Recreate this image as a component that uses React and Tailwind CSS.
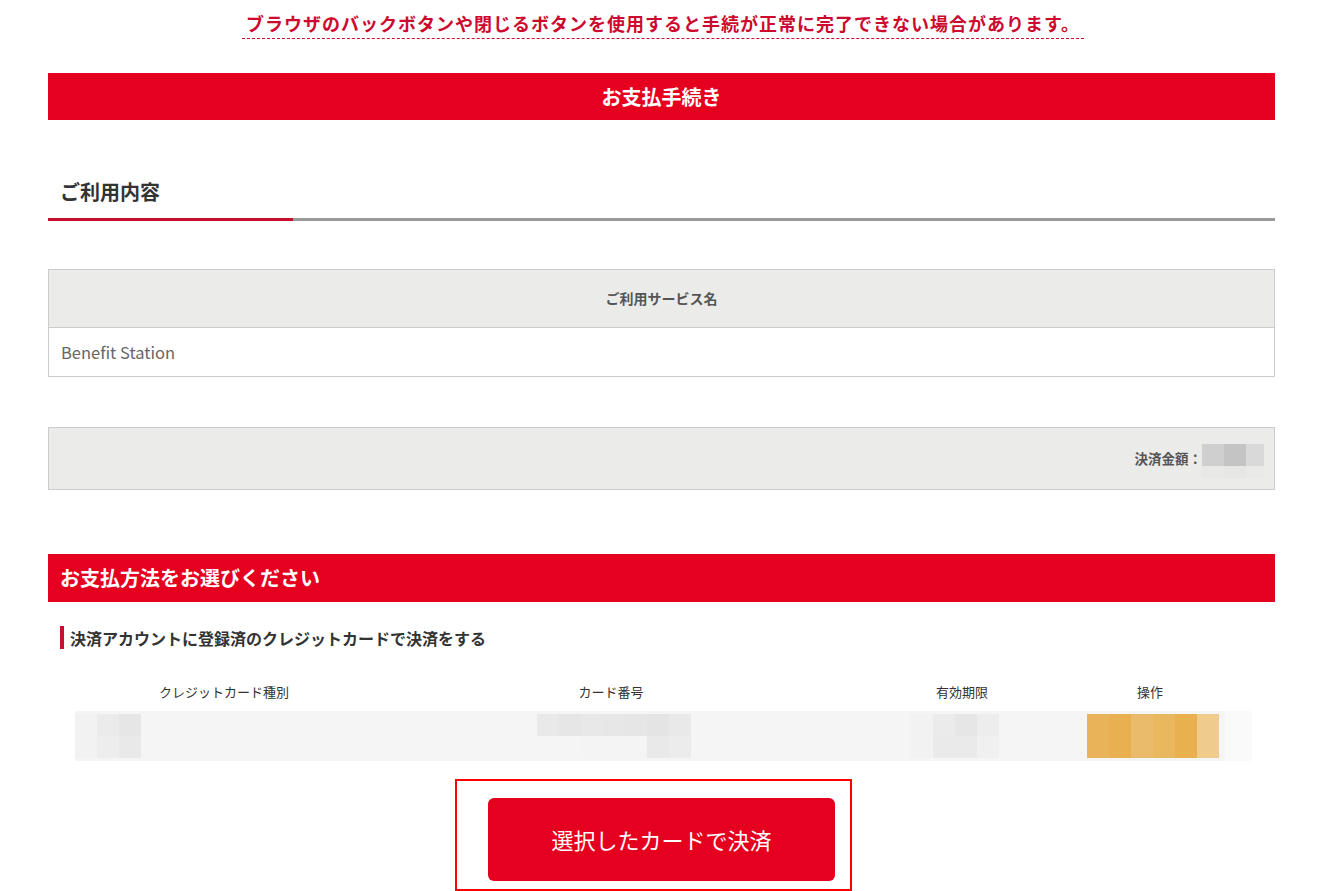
import React from "react";

const jp = { fontFamily: '"Noto Sans CJK JP", "Noto Sans", sans-serif' };

function Blocks({ rows }) {
  return (
    <div className="flex flex-col">
      {rows.map((r, i) => (
        <div key={i} className="flex">
          {r.map((c, j) => (
            <div key={j} className="w-[22px] h-[22px]" style={{ background: c }} />
          ))}
        </div>
      ))}
    </div>
  );
}

export default function App() {
  return (
    <div className="w-[1326px] min-h-[891px] bg-white text-[#333]" style={jp}>
      <div className="flex justify-center pt-[10px]">
        <p className="text-[18px] leading-[27px] tracking-[1px] font-bold text-[#cc0a2f] border-b border-dashed border-[#cc0a2f] pb-[1px] px-[4px]">
          ブラウザのバックボタンや閉じるボタンを使用すると手続が正常に完了できない場合があります。
        </p>
      </div>

      <div className="ml-[48px] w-[1227px]">
        <div className="mt-[34px] h-[47px] bg-[#e60020] flex items-center justify-center text-white text-[20px] font-bold">
          お支払手続き
        </div>

        <div className="mt-[52px] h-[40px] pl-[12px] flex items-center text-[20px] font-bold text-[#333]">
          ご利用内容
        </div>
        <div className="mt-[6px] flex h-[3px]">
          <div className="w-[245px] bg-[#c8102e]" />
          <div className="flex-1 bg-[#999]" />
        </div>

        <div className="mt-[48px] border border-[#ccc]">
          <div className="h-[58px] bg-[#ebecea] border-b border-[#ccc] flex items-center justify-center text-[14px] font-bold text-[#555]">
            ご利用サービス名
          </div>
          <div className="h-[48px] flex items-center pl-[12px] text-[16.5px] text-[#666]">
            Benefit Station
          </div>
        </div>

        <div className="mt-[50px] h-[63px] border border-[#ccc] bg-[#ebecea] flex items-center justify-end pr-[10px]">
          <span className="text-[13.5px] font-bold text-[#555]">決済金額：</span>
          <div className="flex flex-col mt-[4px]">
            <div className="flex">
              <div className="w-[22px] h-[22px] bg-[#cfcfcf]" />
              <div className="w-[22px] h-[22px] bg-[#c4c4c4]" />
              <div className="w-[18px] h-[22px] bg-[#d9d9d9]" />
            </div>
            <div className="flex">
              <div className="w-[22px] h-[12px] bg-[#e8e9e7]" />
              <div className="w-[22px] h-[12px] bg-[#e6e7e5]" />
              <div className="w-[18px] h-[12px] bg-[#e9eae8]" />
            </div>
          </div>
        </div>

        <div className="mt-[64px] h-[48px] bg-[#e60020] flex items-center pl-[12px] text-white text-[20px] font-bold">
          お支払方法をお選びください
        </div>

        <div className="mt-[24px] ml-[12px] flex items-center h-[23px]">
          <div className="w-[4px] h-[23px] bg-[#c8102e]" />
          <span className="ml-[6px] text-[16px] font-bold text-[#333]">
            決済アカウントに登録済のクレジットカードで決済をする
          </span>
        </div>

        <div className="ml-[27px] mt-[33px] w-[1177px]">
          <div className="grid grid-cols-[298px_476px_226px_150px_27px] text-[13px] text-[#333] h-[20px] items-center">
            <div className="text-center">クレジットカード種別</div>
            <div className="text-center">カード番号</div>
            <div className="text-center">有効期限</div>
            <div className="text-center">操作</div>
            <div />
          </div>
          <div className="mt-[9px] grid grid-cols-[298px_476px_226px_150px_27px] h-[50px] bg-[#f5f5f5] items-center">
            <div className="flex">
              <Blocks rows={[["#f2f2f2", "#ebebeb", "#e6e6e6"], ["#f2f2f2", "#ededed", "#e9e9e9"]]} />
            </div>
            <div className="pl-[164px] flex">
              <div className="flex flex-col">
                <div className="flex">
                  {["#e9e9e9", "#e6e6e6", "#e8e8e8", "#e7e7e7", "#e6e6e6", "#e4e4e4", "#e9e9e9"].map((c, i) => (
                    <div key={i} className="w-[22px] h-[22px]" style={{ background: c }} />
                  ))}
                </div>
                <div className="flex">
                  {["#f5f5f5", "#f5f5f5", "#f4f4f4", "#f4f4f4", "#f4f4f4", "#e9e9e9", "#ececec"].map((c, i) => (
                    <div key={i} className="w-[22px] h-[22px]" style={{ background: c }} />
                  ))}
                </div>
              </div>
            </div>
            <div className="pl-[62px] flex">
              <Blocks rows={[["#f2f2f2", "#ebebeb", "#e6e6e6", "#ededed"], ["#f2f2f2", "#eaeaea", "#eaeaea", "#f0f0f0"]]} />
            </div>
            <div className="pl-[12px] flex">
              <div className="flex h-[44px]">
                {["#e9b35a", "#e8b050", "#e9bb6a", "#e8b75e", "#e9b04e", "#efcb8d"].map((c, i) => (
                  <div key={i} className="w-[22px] h-[44px]" style={{ background: c }} />
                ))}
              </div>
            </div>
            <div className="h-[50px] bg-[#fafafa]" />
          </div>
        </div>

        <div className="mt-[18px] flex justify-center">
          <div className="ml-[-16px] w-[397px] h-[112px] border-2 border-[#ff0000] flex pl-[31px] pt-[17px]">
            <button className="w-[347px] h-[83px] rounded-[6px] bg-[#e60020] text-white text-[22px] font-normal" style={jp}>
              選択したカードで決済
            </button>
          </div>
        </div>
      </div>
    </div>
  );
}
